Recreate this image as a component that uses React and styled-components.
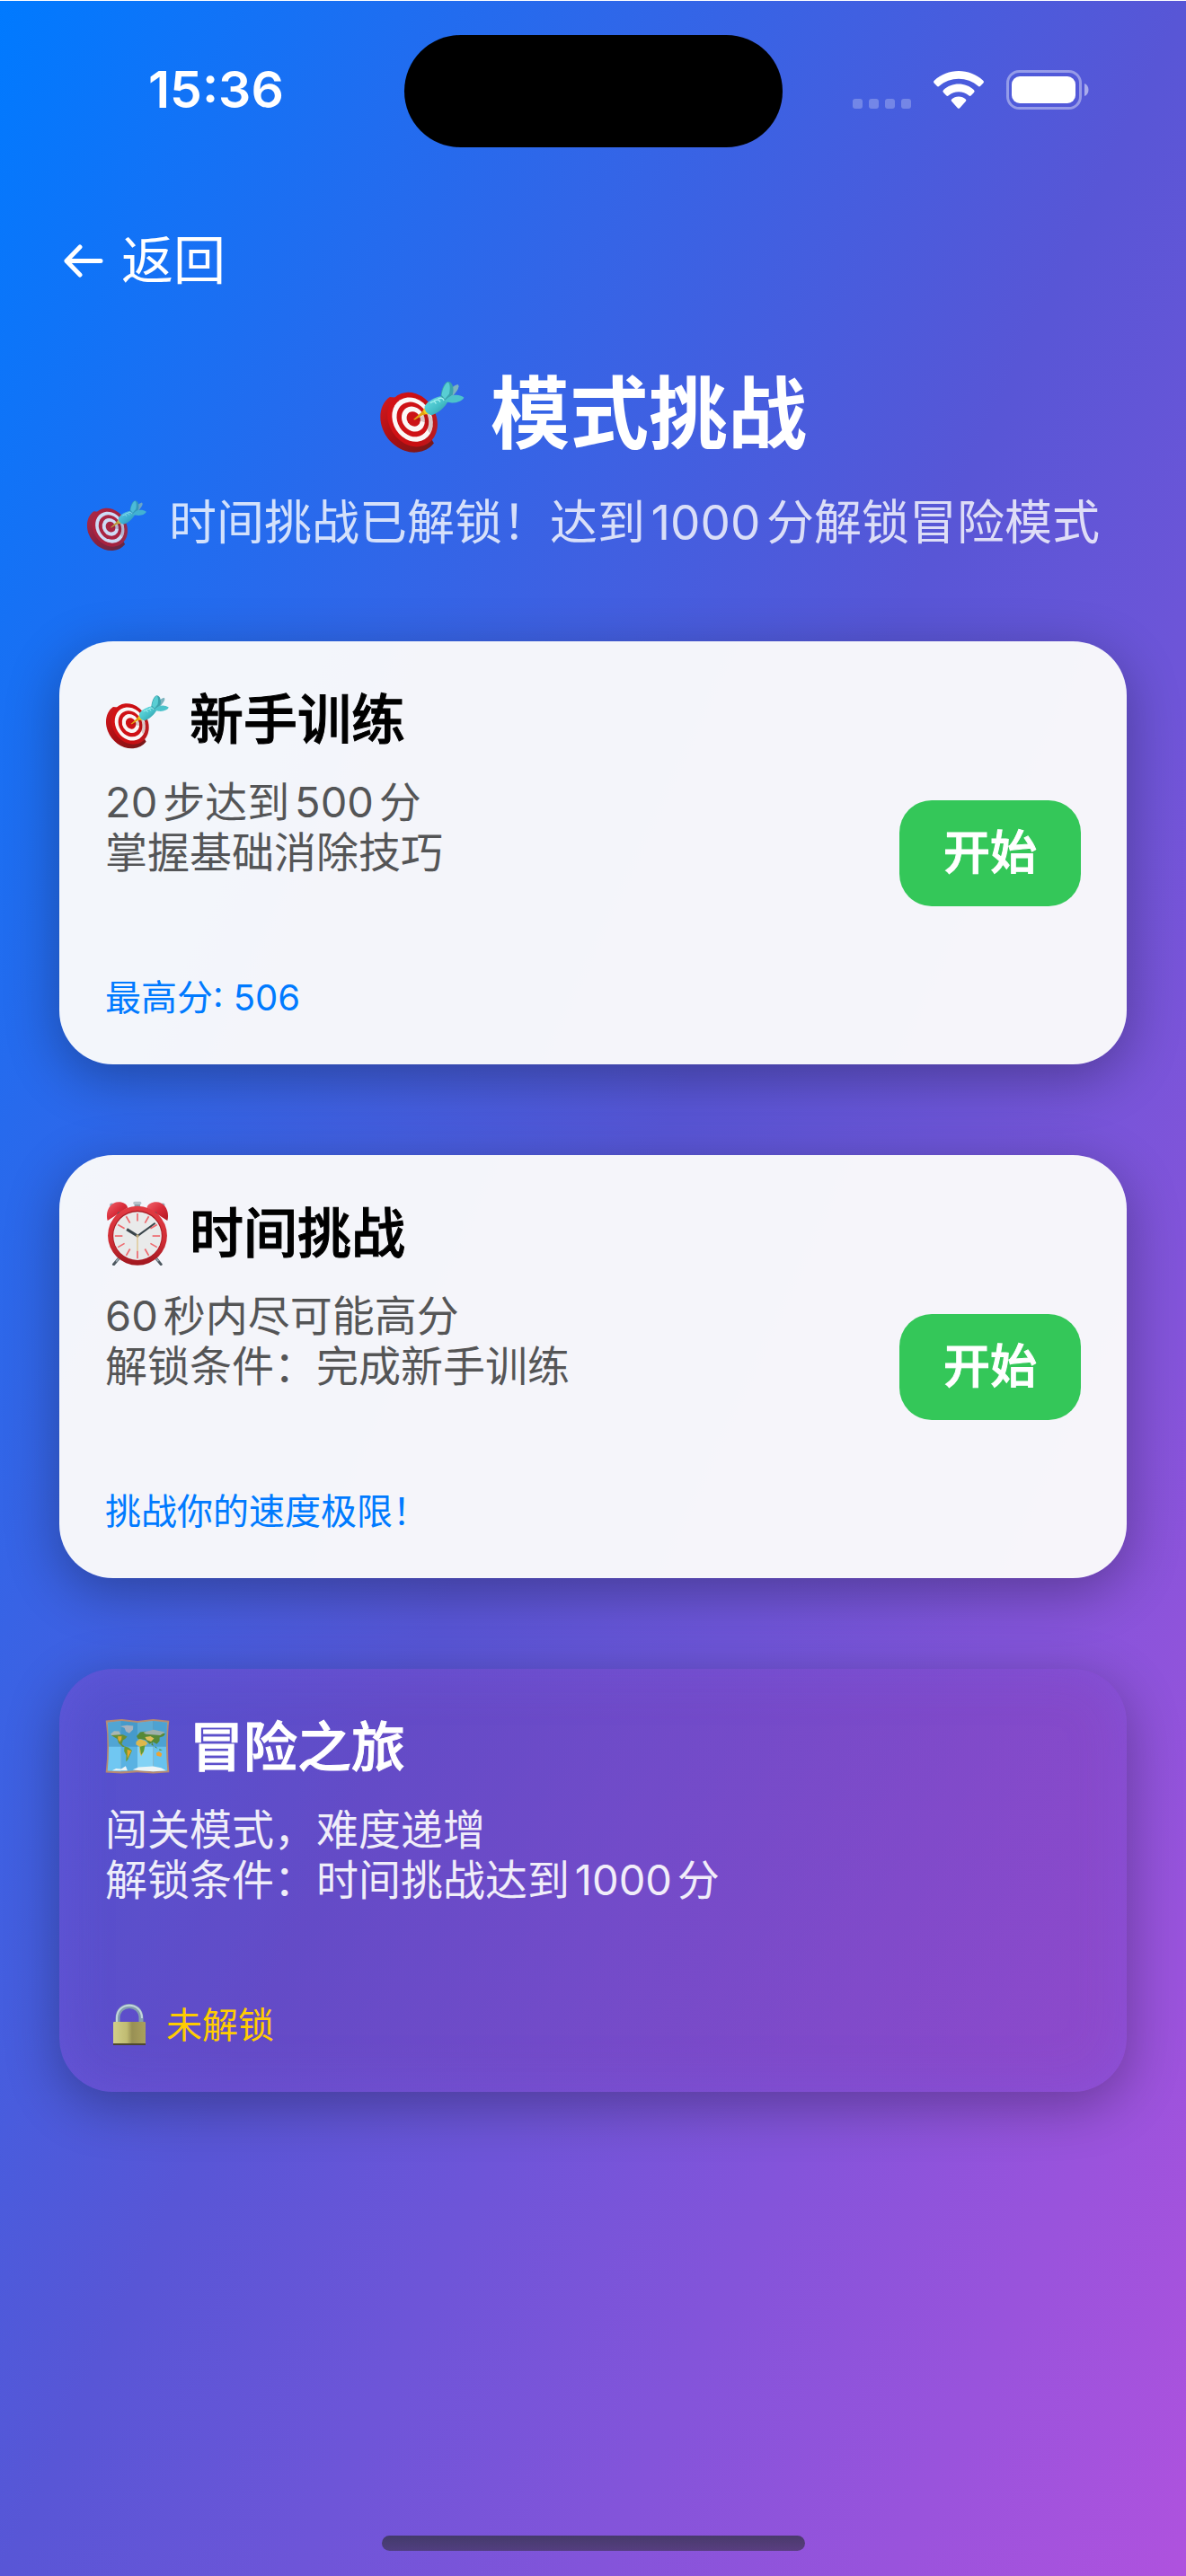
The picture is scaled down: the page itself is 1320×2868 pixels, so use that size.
import React from "react";
import styled, { createGlobalStyle } from "styled-components";

const modes = [
  {
    id: "training",
    icon: TargetIcon,
    title: "新手训练",
    lines: ["20步达到500分", "掌握基础消除技巧"],
    note: "最高分: 506",
  },
  {
    id: "time",
    icon: ClockIcon,
    title: "时间挑战",
    lines: ["60秒内尽可能高分", "解锁条件：完成新手训练"],
    note: "挑战你的速度极限！",
  },
  {
    id: "adventure",
    icon: MapIcon,
    title: "冒险之旅",
    lines: ["闯关模式，难度递增", "解锁条件：时间挑战达到1000分"],
    note: "未解锁",
    locked: true,
  },
];

export default function App() {
  return (
    <Page>
      <GlobalStyle />
      <StatusBar>
        <Time>15:36</Time>
        <Island />
        <StatusIcons>
          <SignalIcon />
          <WifiIcon />
          <BatteryIcon />
        </StatusIcons>
      </StatusBar>
      <Content>
        <BackButton type="button">
          <ArrowIcon />
          返回
        </BackButton>
        <Title>
          <TargetIcon id="title" width="96" height="89" />
          模式挑战
        </Title>
        <Subtitle>
          <TargetIcon id="subtitle" width="68" height="63" />
          <span>时间挑战已解锁！达到1000分解锁冒险模式</span>
        </Subtitle>
        <Cards>
          {modes.map(({ id, icon: Icon, title, lines, note, locked }) => (
            <Card key={id} $locked={locked}>
              <div>
                <CardTitle>
                  <Icon id={id} width="72" height="72" />
                  {title}
                </CardTitle>
                <Description $locked={locked}>
                  {lines.map((line) => (
                    <span key={line}>{line}</span>
                  ))}
                </Description>
                <Note $locked={locked}>
                  {locked && <LockIcon />}
                  {note}
                </Note>
              </div>
              {!locked && <StartButton type="button">开始</StartButton>}
            </Card>
          ))}
        </Cards>
      </Content>
      <HomeIndicator />
    </Page>
  );
}

function SignalIcon() {
  return (
    <svg width="65" height="44" viewBox="0 0 65 44" fill="#fff" opacity="0.25">
      <rect x="0" y="32" width="11" height="11" rx="3" />
      <rect x="18" y="32" width="11" height="11" rx="3" />
      <rect x="36" y="32" width="11" height="11" rx="3" />
      <rect x="54" y="32" width="11" height="11" rx="3" />
    </svg>
  );
}

function WifiIcon() {
  return (
    <svg width="58" height="44" viewBox="0 0 58 44" fill="#fff">
      <path d="M29 1C39 1 48.500 4.700 56 11.400Q58 13 56.400 14.600L53.200 17.800Q52 19 50.600 17.800C44.600 12.500 37 9.700 29 9.700S13.400 12.500 7.400 17.800Q6 19 4.800 17.800L1.600 14.600Q0 13 2 11.400C9.500 4.700 19 1 29 1Z" />
      <path d="M29 15.600C35.300 15.600 41.200 17.900 45.800 22Q47.500 23.500 46 25L42.600 28.400Q41.500 29.400 40.200 28.300C37 25.700 33.200 24.300 29 24.300S21 25.700 17.800 28.300Q16.500 29.400 15.400 28.400L12 25Q10.500 23.500 12.200 22C16.800 17.900 22.700 15.600 29 15.600Z" />
      <path d="M29 29.500C32 29.500 34.700 30.600 36.800 32.400Q38 33.500 36.900 34.700L30.200 42.200Q29 43.400 27.800 42.200L21.100 34.700Q20 33.500 21.200 32.400C23.300 30.600 26 29.500 29 29.500Z" />
    </svg>
  );
}

function BatteryIcon() {
  return (
    <svg width="93" height="44" viewBox="0 0 93 44" fill="none">
      <rect x="1.500" y="1.500" width="81" height="41" rx="13" stroke="#fff" strokeOpacity="0.4" strokeWidth="3" />
      <rect x="6" y="7" width="71" height="30" rx="9" fill="#fff" />
      <path d="M87 15C93 17 93 27 87 29Z" fill="#fff" fillOpacity="0.5" />
    </svg>
  );
}

function ArrowIcon() {
  return (
    <svg width="44" height="37" viewBox="0 0 44 37" fill="none" stroke="#fff" strokeWidth="5" strokeLinecap="round" strokeLinejoin="round">
      <path d="M41 18.500H3M18 3L3 18.500L18 34" />
    </svg>
  );
}

function TargetIcon({ id, width, height }) {
  return (
    <svg width={width} height={height} viewBox="30 6 290 268">
      <defs>
        <linearGradient id={`${id}-side`} x1="0" y1="0" x2="1" y2="1">
          <stop offset="0" stopColor="#d51a1e" />
          <stop offset="0.500" stopColor="#a80e12" />
          <stop offset="1" stopColor="#6e1a1a" />
        </linearGradient>
        <linearGradient id={`${id}-face`} x1="0" y1="0" x2="1" y2="1">
          <stop offset="0" stopColor="#d81417" />
          <stop offset="0.600" stopColor="#c80e12" />
          <stop offset="1" stopColor="#b0252a" />
        </linearGradient>
        <linearGradient id={`${id}-dart`} x1="0" y1="0" x2="1" y2="1">
          <stop offset="0" stopColor="#6fe3e6" />
          <stop offset="0.550" stopColor="#45bfc8" />
          <stop offset="1" stopColor="#2b8f9b" />
        </linearGradient>
      </defs>
      <path d="M66 84C36 104 25 150 42 192C60 240 110 274 156 270C180 268 200 258 214 240L130 90Z" fill={`url(#${id}-side)`} />
      <g transform="rotate(-32 142 160)">
        <ellipse cx="142" cy="160" rx="79" ry="96" fill={`url(#${id}-face)`} />
        <ellipse cx="142" cy="160" rx="65" ry="78" fill="#fbf8f7" />
        <ellipse cx="143" cy="160" rx="51" ry="61" fill="#cf1216" />
        <ellipse cx="145" cy="160" rx="37" ry="44" fill="#fbf8f7" />
        <ellipse cx="146" cy="160" rx="22" ry="26" fill="#cc1216" />
      </g>
      <path d="M152 160L195 138L212 160Q214 186 200 206Q186 186 186 170Z" fill="#6b1717" opacity="0.220" />
      <path d="M145 160L174 134L182 122L196 140L176 145L150 161Z" fill="#e2a511" />
      <path d="M182 122Q176 130 182 138Q188 146 199 140Z" fill="#f5cd20" />
      <path d="M245 82Q276 46 294 42Q304 48 285 72L270 90Z" fill="#7cb3be" />
      <path d="M183 116C190 98 222 82 244 81L262 96C254 118 224 142 205 145C190 142 182 130 183 116Z" fill={`url(#${id}-dart)`} />
      <path d="M237 82C239 55 251 32 263 32C277 34 283 56 277 76L251 99Z" fill="#3aa3ad" />
      <path d="M240 78C243 54 254 35 262 34C269 40 269 60 265 74L251 91Z" fill="#58ced3" />
      <path d="M249 99C264 78 292 70 315 86C312 97 290 106 270 103Z" fill="#4cc3cb" />
      <path d="M202 104Q218 94 221 107M214 97Q231 88 235 101M228 90Q244 84 248 96" fill="none" stroke="#a5f1f0" strokeWidth="4" />
    </svg>
  );
}

function ClockIcon({ width, height }) {
  const ticks = [0, 30, 60, 90, 120, 150, 180, 210, 240, 270, 300, 330];
  return (
    <svg width={width} height={height} viewBox="30 36 212 212">
      <defs>
        <linearGradient id="clock-rim" x1="0" y1="0" x2="0" y2="1">
          <stop offset="0" stopColor="#e23c44" />
          <stop offset="0.600" stopColor="#cf2c34" />
          <stop offset="1" stopColor="#9f161e" />
        </linearGradient>
        <linearGradient id="clock-bell" x1="0" y1="0" x2="1" y2="1">
          <stop offset="0" stopColor="#f0646c" />
          <stop offset="0.500" stopColor="#d92c3a" />
          <stop offset="1" stopColor="#b01822" />
        </linearGradient>
      </defs>
      <path d="M82 216L58 244M190 216L213 244" stroke="#4d5860" strokeWidth="9" strokeLinecap="round" />
      <path d="M84 214L66 235M188 214L205 234" stroke="#9babb3" strokeWidth="5" />
      <rect x="126" y="42" width="19" height="20" rx="4" fill="#8d9da8" />
      <rect x="122" y="38" width="27" height="10" rx="5" fill="#b6c2cb" />
      <circle cx="52" cy="50" r="7" fill="#9caab5" />
      <circle cx="219" cy="50" r="7" fill="#9caab5" />
      <path d="M38 101C29 70 48 39 75 40C90 40 101 47 104 58Z" fill="url(#clock-bell)" />
      <path d="M234 101C243 70 224 39 197 40C182 40 170 47 167 58Z" fill="url(#clock-bell)" />
      <circle cx="76" cy="78" r="6" fill="#555d63" />
      <circle cx="194" cy="78" r="6" fill="#555d63" />
      <ellipse cx="136" cy="150" rx="97" ry="97" fill="url(#clock-rim)" />
      <ellipse cx="136" cy="150" rx="82" ry="82" fill="#ab1c25" />
      <circle cx="136" cy="151" r="79" fill="#e9eaea" />
      <g stroke="#ee686d" strokeWidth="5">
        {ticks.map((angle) => (
          <path key={angle} d="M136 77V102" transform={`rotate(${angle} 136 151)`} />
        ))}
      </g>
      <path d="M136 151V201" stroke="#dfc68e" strokeWidth="4" />
      <path d="M136 151L101 129" stroke="#39444a" strokeWidth="9" />
      <path d="M136 151L194 109" stroke="#39444a" strokeWidth="6" />
      <circle cx="136" cy="151" r="5" fill="#b9a77e" />
    </svg>
  );
}

function MapIcon({ width, height }) {
  return (
    <svg width={width} height={height} viewBox="58 28 214 214">
      <path d="M60 47L113 43L165 49L217 43L270 48Q265 85 266 133Q266 180 270 219L217 223L165 219L113 223L60 220Q65 180 65 133Q66 88 60 47Z" fill="#b58a72" />
      <path d="M66 54L111 49V216L66 214Q70 170 70 134Q70 92 66 54Z" fill="#70c7f2" />
      <path d="M111 49L165 55V212L111 216Z" fill="#59b2e2" />
      <path d="M165 55L217 49V216L165 212Z" fill="#83d2f5" />
      <path d="M217 49L264 54Q260 92 260 134Q261 175 264 214L217 216Z" fill="#68c2ee" />
      <path d="M67 54L111 49L165 55L217 49L263 54L260 134H70Z" fill="#2c7daf" opacity="0.450" />
      <path d="M76 92L88 82L104 83L109 93L99 98L79 96Z" fill="#aab7b3" />
      <path d="M78 96L99 95L117 94L131 101L124 108L117 113L113 125L123 134L117 135L103 122L98 108Z" fill="#668f35" />
      <path d="M100 100L113 99L112 109L107 119L101 111Z" fill="#dfa92f" />
      <path d="M108 67L130 63L151 65L150 78L138 90L127 84L122 72Z" fill="#a7b2bd" />
      <path d="M122 133L136 137L147 147L141 160L133 177L127 183L128 163L121 149Z" fill="#699934" />
      <path d="M131 143L145 148L139 159L132 174Z" fill="#e5a52f" />
      <path d="M162 99L174 86L190 84L210 87L237 87L257 91L251 99L238 104L238 115L229 125L217 119L205 125L193 113L179 109L167 109Z" fill="#568936" />
      <path d="M184 87L218 78L256 86L240 96L193 93Z" fill="#9fb0aa" />
      <path d="M161 117L173 109L190 114L199 123L188 134L185 153L177 166L172 151L172 134L160 127Z" fill="#ddb84d" />
      <path d="M173 134L190 130L186 149L177 161Z" fill="#5c9a38" />
      <path d="M190 102L208 99L220 107L210 117L196 112Z" fill="#e0bd5a" />
      <path d="M213 118L218 131L211 128ZM223 132L232 140L224 137ZM237 142L248 145L238 147Z" fill="#4d8e35" />
      <path d="M227 155L236 150L246 157L243 168L229 164Z" fill="#eea331" />
      <path d="M81 213L94 206L111 208L126 198L132 213ZM149 210L169 202L217 199L243 204L260 213L217 216L165 212Z" fill="#edf4f6" />
    </svg>
  );
}

function LockIcon() {
  return (
    <svg width="56" height="47" viewBox="0 0 56 47">
      <defs>
        <linearGradient id="lock-body" x1="0" y1="0" x2="1" y2="0">
          <stop offset="0" stopColor="#d2cf89" />
          <stop offset="0.420" stopColor="#c0bc72" />
          <stop offset="0.580" stopColor="#989054" />
          <stop offset="1" stopColor="#aaa05d" />
        </linearGradient>
      </defs>
      <path d="M14 22V16C14 -2 40 -2 40 16V22" fill="none" stroke="#849faf" strokeWidth="5" />
      <path d="M13 22V16C13 -3 41 -3 41 16" fill="none" stroke="#c3d6de" strokeWidth="2" />
      <rect x="9" y="20" width="36" height="26" rx="1" fill="url(#lock-body)" />
      <path d="M9 45H45" stroke="#4d4730" strokeWidth="2" />
    </svg>
  );
}

const GlobalStyle = createGlobalStyle`
  * {
    box-sizing: border-box;
  }
  body {
    margin: 0;
    font-family: Inter, "Noto Sans CJK SC", sans-serif;
    text-autospace: normal;
    color: #fff;
  }
  h1,
  h2,
  p {
    margin: 0;
  }
  button {
    border: 0;
    font-family: inherit;
    color: inherit;
    cursor: pointer;
  }
  svg {
    display: block;
    flex-shrink: 0;
  }
`;

const Page = styled.div`
  display: flex;
  flex-direction: column;
  min-height: 100vh;
  border-top: 1px solid #fff;
  background: linear-gradient(to bottom right, #007aff, #5856d6, #af52de);
`;
const StatusBar = styled.header`
  display: grid;
  grid-template-columns: 1fr auto 1fr;
  align-items: center;
  padding: 38px 107px 38px 165px;
`;
const Time = styled.span`
  padding-bottom: 3px;
  font-size: 57px;
  line-height: 60px;
  font-weight: 600;
`;
const Island = styled.div`
  width: 421px;
  height: 125px;
  border-radius: 63px;
  background: #000;
  /* the side paddings differ, this keeps the pill on the page centre */
  margin: 0 29px 0 -29px;
`;
const StatusIcons = styled.div`
  display: flex;
  justify-content: flex-end;
  align-items: center;
  gap: 24px;
  padding-bottom: 3px;
`;
const Content = styled.main`
  display: flex;
  flex-direction: column;
  padding: 52px 66px 0;
`;
const BackButton = styled.button`
  display: flex;
  align-items: center;
  align-self: flex-start;
  gap: 20px;
  padding: 0 5px;
  background: none;
  font-size: 58px;
  line-height: 72px;
`;
const Title = styled.h1`
  display: flex;
  align-items: center;
  justify-content: center;
  gap: 28px;
  margin-top: 74px;
  font-size: 88px;
  line-height: 120px;
  font-weight: 700;
`;
const Subtitle = styled.p`
  display: flex;
  align-items: center;
  justify-content: center;
  gap: 24px;
  margin-top: 30px;
  font-size: 53px;
  line-height: 64px;
  white-space: nowrap;
  opacity: 0.8;
`;
const Cards = styled.div`
  display: flex;
  flex-direction: column;
  gap: 101px;
  margin-top: 100px;
`;
const Card = styled.section`
  display: flex;
  align-items: center;
  justify-content: space-between;
  padding: 51px;
  border-radius: 60px;
  color: ${(props) => (props.$locked ? "#fff" : "#000")};
  background: ${(props) =>
    props.$locked
      ? "linear-gradient(rgba(135, 60, 185, 0.3), rgba(135, 60, 185, 0.3)), rgba(0, 0, 0, 0.04)"
      : "linear-gradient(rgba(255, 255, 255, 0.95), rgba(255, 255, 255, 0.95)), rgba(0, 0, 0, 0.3)"};
  box-shadow: 0 15px 60px rgba(0, 0, 0, 0.3)
    ${(props) => props.$locked && ", inset 0 0 60px rgba(130, 100, 245, 0.3)"};
`;
const CardTitle = styled.h2`
  display: flex;
  align-items: center;
  gap: 22px;
  font-size: 60px;
  line-height: 72px;
  font-weight: 500;
  -webkit-text-stroke: 1px currentColor;
`;
const Description = styled.p`
  display: flex;
  flex-direction: column;
  margin-top: 28px;
  font-size: 47px;
  line-height: 56px;
  opacity: ${(props) => (props.$locked ? 0.9 : 0.65)};
`;
const Note = styled.p`
  display: flex;
  align-items: center;
  gap: 12px;
  margin-top: 110px;
  font-size: 40px;
  line-height: 47px;
  color: ${(props) => (props.$locked ? "#ffcc00" : "#007aff")};
`;
const StartButton = styled.button`
  padding: 27px 49px;
  border-radius: 36px;
  background: #34c759;
  color: #fff;
  font-size: 52px;
  line-height: 64px;
  font-weight: 500;
  -webkit-text-stroke: 1px currentColor;
`;
const HomeIndicator = styled.div`
  align-self: center;
  width: 471px;
  height: 17px;
  margin-top: auto;
  margin-bottom: 28px;
  border-radius: 9px;
  background: linear-gradient(rgba(50, 50, 70, 0.75), rgba(60, 50, 80, 0.65));
`;
